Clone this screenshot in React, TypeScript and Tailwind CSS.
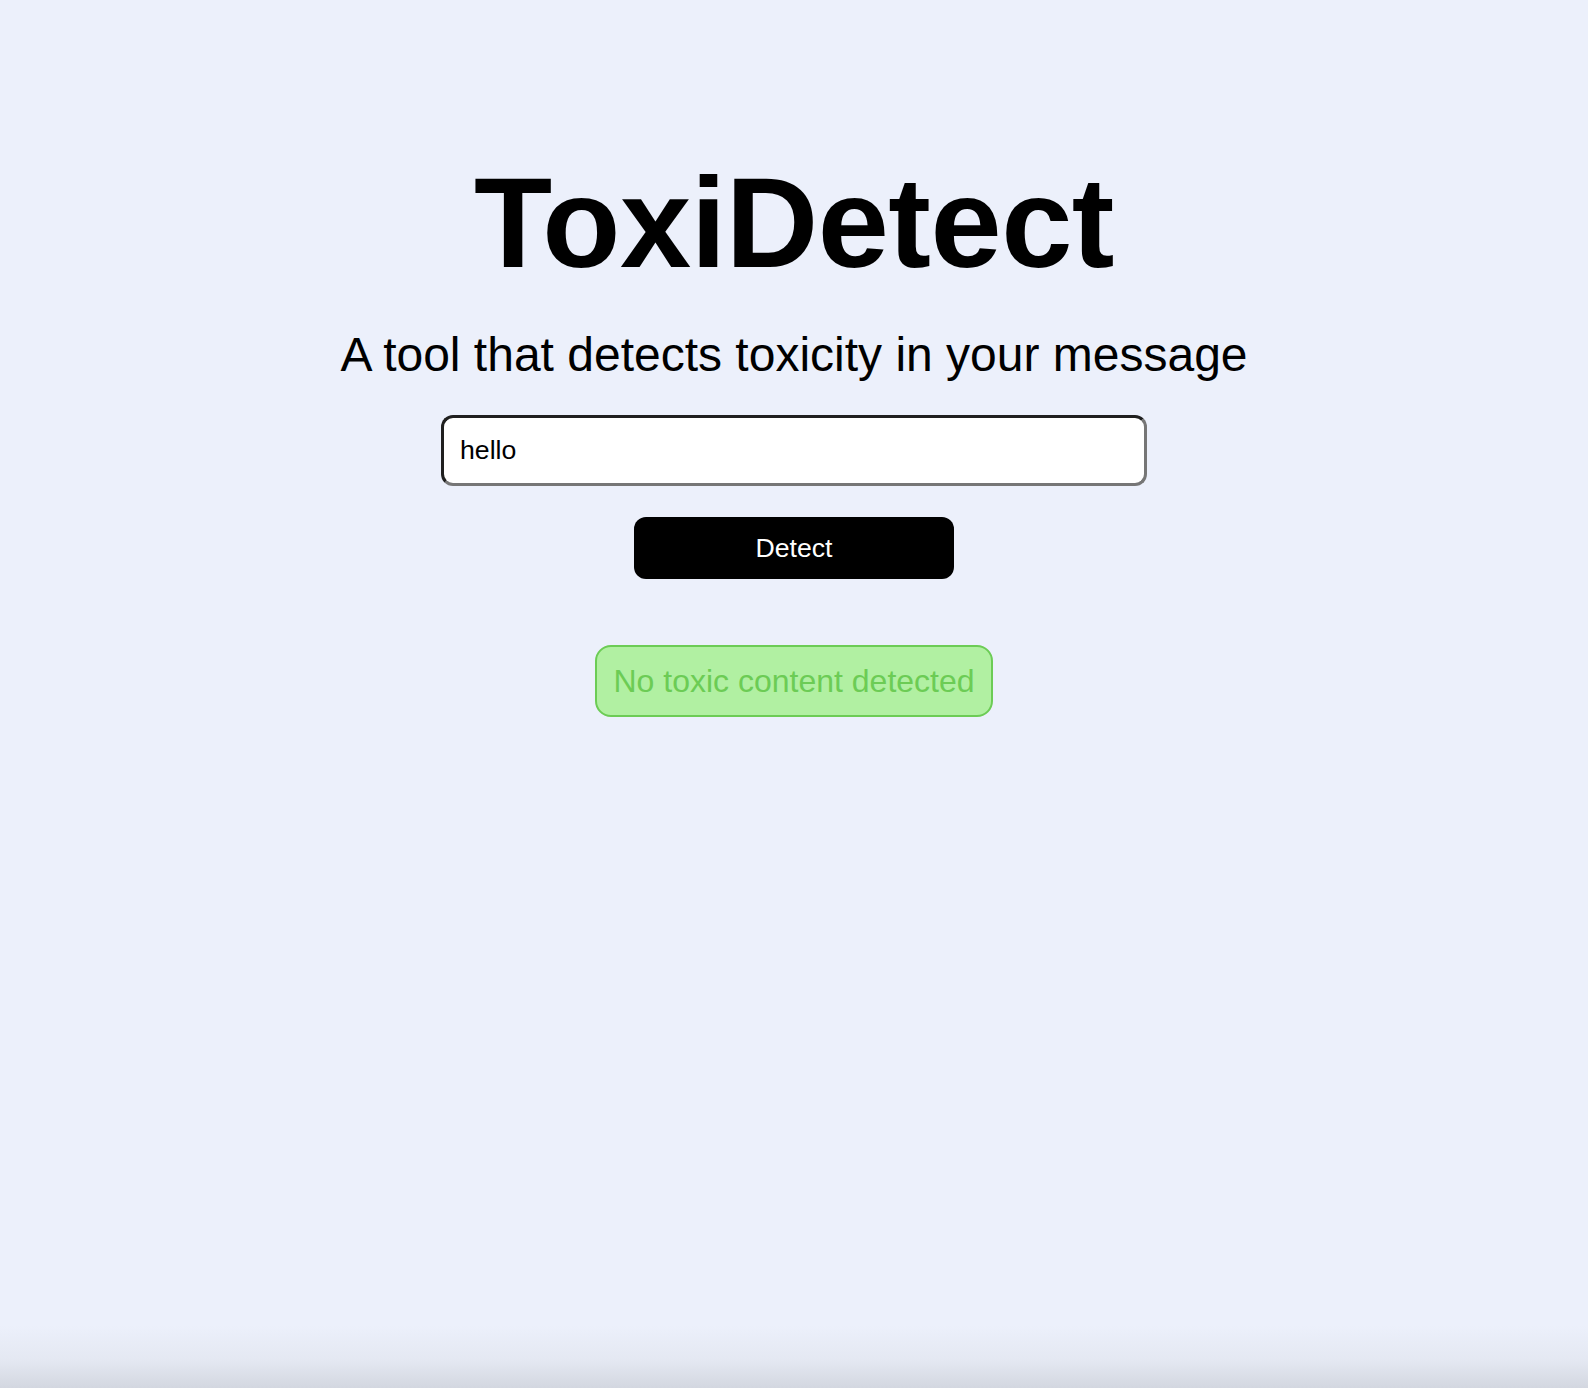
import { useState } from "react";

export default function App() {
    const [message, setMessage] = useState("hello");
    const [result] = useState<"clean" | "toxic" | null>("clean");

    return (
        <div
            className="min-h-[1388px] w-full flex flex-col items-center bg-[linear-gradient(to_bottom,#ecf0fb_0%,#ecf0fb_95.5%,#e4e8f2_98%,#d3d7e0_100%)] text-black"
            style={{ fontFamily: '"Liberation Sans", Arial, Helvetica, sans-serif' }}
        >
            <h1 className="mt-[159px] text-[128px] leading-none font-bold tracking-[-0.5px]">ToxiDetect</h1>
            <p className="mt-[44px] text-[48px] leading-none">A tool that detects toxicity in your message</p>

            {/* Message input */}
            <input
                value={message}
                onChange={(e) => setMessage(e.target.value)}
                className="mt-[36px] w-[706px] h-[71px] px-[16px] bg-white rounded-[12px] border-[3px] border-solid border-t-[#1f1f1f] border-l-[#1f1f1f] border-b-[#767676] border-r-[#767676] text-[26.67px] text-black outline-none"
            />

            <button className="mt-[31px] w-[320px] h-[62px] rounded-[12px] bg-black text-white text-[26.67px] leading-none">
                Detect
            </button>

            {result === "clean" && (
                <div className="mt-[66px] px-[16px] py-[16px] rounded-[16px] border-2 border-[#6ccc55] bg-[#b1f0a2] text-[#6ccc55] text-[32px] leading-[36px]">
                    No toxic content detected
                </div>
            )}
        </div>
    );
}
